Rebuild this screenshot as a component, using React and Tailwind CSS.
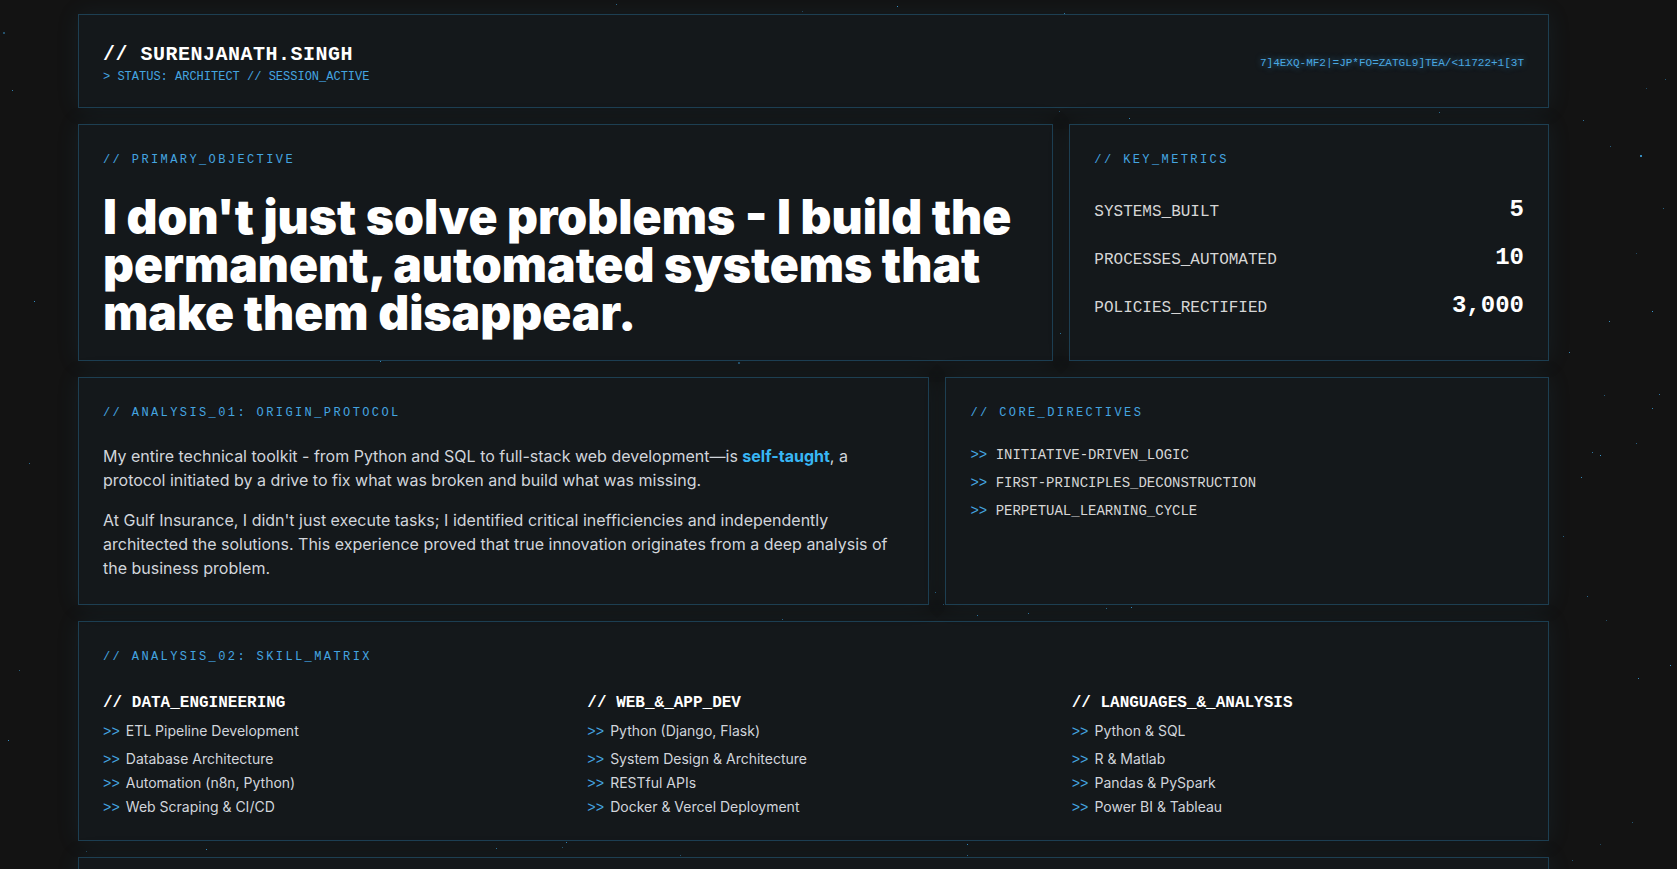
import React from 'react';

const mono = "font-['Liberation_Mono','DejaVu_Sans_Mono',monospace]";
const sans = "font-['Inter','Noto_Sans',sans-serif]";
const panel = 'bg-[#14181b] border border-[#1d3f52] shadow-[0_0_22px_rgba(40,110,140,0.12)] p-6';
const label = `${mono} text-xs leading-4 tracking-[0.2em] text-[#44a5e0] mt-[3px]`;

// deterministic star field
const makeStars = () => {
  let seed = 17;
  const rand = () => {
    seed = (seed * 16807) % 2147483647;
    return seed / 2147483647;
  };
  const stars = [];
  for (let i = 0; i < 340; i++) {
    const big = rand() > 0.93;
    stars.push({
      x: Math.round(rand() * 1677),
      y: Math.round(rand() * 1100),
      s: big ? 2 : 1,
      o: 0.35 + rand() * 0.6,
    });
  }
  return stars;
};
const stars = makeStars();

const metrics = [
  { name: 'SYSTEMS_BUILT', value: '5' },
  { name: 'PROCESSES_AUTOMATED', value: '10' },
  { name: 'POLICIES_RECTIFIED', value: '3,000' },
];

const directives = ['INITIATIVE-DRIVEN_LOGIC', 'FIRST-PRINCIPLES_DECONSTRUCTION', 'PERPETUAL_LEARNING_CYCLE'];

const skills = [
  {
    title: '// DATA_ENGINEERING',
    items: ['ETL Pipeline Development', 'Database Architecture', 'Automation (n8n, Python)', 'Web Scraping & CI/CD'],
  },
  {
    title: '// WEB_&_APP_DEV',
    items: ['Python (Django, Flask)', 'System Design & Architecture', 'RESTful APIs', 'Docker & Vercel Deployment'],
  },
  {
    title: '// LANGUAGES_&_ANALYSIS',
    items: ['Python & SQL', 'R & Matlab', 'Pandas & PySpark', 'Power BI & Tableau'],
  },
];

const App = () => {
  return (
    <div className="relative min-h-screen bg-[#131313] overflow-hidden">
      {/* background stars */}
      <svg className="absolute inset-0 w-full h-full" width="1677" height="1100">
        {stars.map((st, i) => (
          <rect key={i} x={st.x} y={st.y} width={st.s} height={st.s} fill="#3b9fd8" opacity={st.o} />
        ))}
      </svg>

      <div className="relative ml-[78px] w-[1471px] pt-[14px] pb-10">
        {/* Header */}
        <div className={`${panel} !pt-[26px] !pb-[22px] flex items-center justify-between`}>
          <div>
            <h1 className={`${mono} text-xl font-bold tracking-wide text-white`}>// SURENJANATH.SINGH</h1>
            <p className={`${mono} text-xs text-[#44a5e0]`}>&gt; STATUS: ARCHITECT // SESSION_ACTIVE</p>
          </div>
          <div className={`${mono} text-[11px] text-[#4aa8e2] [text-shadow:0_0_6px_rgba(68,165,224,0.7)]`}>
            7]4EXQ-MF2|=JP*FO=ZATGL9]TEA/&lt;11722+1[3T
          </div>
        </div>

        {/* Row 1 */}
        <div className="grid grid-cols-12 gap-4 mt-4">
          <div className={`${panel} !pb-[23px] col-span-8`}>
            <div className={`${label} mb-[25px]`}>// PRIMARY_OBJECTIVE</div>
            <h2 className={`${sans} text-5xl font-black leading-none text-white`}>
              I don't just solve problems - I build the permanent, automated systems that make them disappear.
            </h2>
          </div>
          <div className={`${panel} col-span-4`}>
            <div className={`${label} mb-[26px]`}>// KEY_METRICS</div>
            <div className="space-y-4">
              {metrics.map((m) => (
                <div key={m.name} className={`${mono} flex items-baseline justify-between`}>
                  <span className="text-base text-[#d6d6d6]">{m.name}</span>
                  <span className="text-2xl font-bold text-white">{m.value}</span>
                </div>
              ))}
            </div>
          </div>
        </div>

        {/* Row 2 */}
        <div className="grid grid-cols-12 gap-4 mt-4">
          <div className={`${panel} col-span-7`}>
            <div className={`${label} mb-[23px]`}>// ANALYSIS_01: ORIGIN_PROTOCOL</div>
            <div className={`${sans} text-base leading-6 text-[#d1d5db] space-y-4`}>
              <p>
                My entire technical toolkit - from Python and SQL to full-stack web development—is{' '}
                <span className="font-bold text-[#38b6f5]">self-taught</span>, a protocol initiated by a drive to fix what
                was broken and build what was missing.
              </p>
              <p>
                At Gulf Insurance, I didn't just execute tasks; I identified critical inefficiencies and independently
                architected the solutions. This experience proved that true innovation originates from a deep analysis of
                the business problem.
              </p>
            </div>
          </div>
          <div className={`${panel} col-span-5`}>
            <div className={`${label} mb-6`}>// CORE_DIRECTIVES</div>
            <ul className={`${mono} text-sm leading-5 space-y-2 text-[#d6d6d6]`}>
              {directives.map((d) => (
                <li key={d}>
                  <span className="text-[#44a5e0]">&gt;&gt;</span> {d}
                </li>
              ))}
            </ul>
          </div>
        </div>

        {/* Row 3 */}
        <div className={`${panel} !pb-[23px] mt-4`}>
          <div className={`${label} mb-[26px]`}>// ANALYSIS_02: SKILL_MATRIX</div>
          <div className="grid grid-cols-3 gap-8">
            {skills.map((col) => (
              <div key={col.title}>
                <h3 className={`${mono} text-base font-bold text-white mb-1`}>{col.title}</h3>
                <ul className={`${sans} text-sm leading-5 space-y-1 text-[#d1d5db]`}>
                  {col.items.map((it, i) => (
                    <li key={it} className={i === 0 ? 'pt-0.5 pb-1' : ''}>
                      <span className={`${mono} leading-none text-[#44a5e0] mr-1.5`}>&gt;&gt;</span>
                      {it}
                    </li>
                  ))}
                </ul>
              </div>
            ))}
          </div>
        </div>

        {/* Row 4 (below the fold) */}
        <div className={`${panel} mt-4 h-[240px]`}>
          <div className={`${label} mb-6`}>// ANALYSIS_03: EXECUTION_LOG</div>
        </div>
      </div>
    </div>
  );
};

export default App;
